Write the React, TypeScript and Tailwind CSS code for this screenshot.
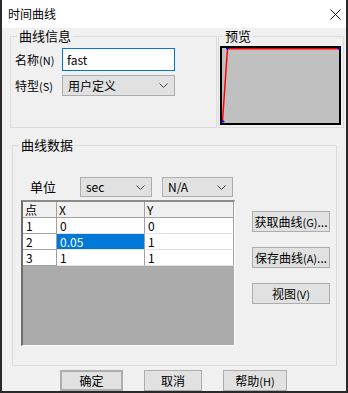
import React from 'react';

const Chevron = () => (
  <svg width="9" height="5" viewBox="0 0 9 5" className="shrink-0">
    <path d="M0.5 0.5L4.5 4.5L8.5 0.5" fill="none" stroke="#444" strokeWidth="1" />
  </svg>
);

const Select = ({ value, className }: { value: string; className: string }) => (
  <div
    className={`flex items-center justify-between border border-[#adadad] bg-[#e1e1e1] pl-[5px] pr-[6px] ${className}`}>
    <span>{value}</span>
    <Chevron />
  </div>
);

const Button = ({ children, className }: { children: React.ReactNode; className: string }) => (
  <div
    className={`flex items-center justify-center border border-[#adadad] bg-[#e1e1e1] text-[12px] leading-[14px] ${className}`}>
    {children}
  </div>
);

const Key = ({ k }: { k: string }) => <span className="text-[11px]">({k})</span>;

const rows = [
  ['1', '0', '0'],
  ['2', '0.05', '1'],
  ['3', '1', '1']
];

export default function App() {
  return (
    <div className="w-[348px] h-[393px] flex flex-col bg-[#f0f0f0] border-x-2 border-b-2 border-[#2a2a2a] text-[12px] leading-[14px] text-black font-['Noto_Sans_CJK_SC','Microsoft_YaHei',sans-serif]">
      {/* title bar */}
      <div className="h-[28px] shrink-0 flex items-center bg-white pl-[6px] pr-[5px]">
        <span className="text-[12px]">时间曲线</span>
        <svg width="11" height="11" viewBox="0 0 11 11" className="ml-auto">
          <path d="M0.5 0.5L10.5 10.5M10.5 0.5L0.5 10.5" stroke="#111" strokeWidth="1" />
        </svg>
      </div>

      {/* top groups */}
      <div className="flex mt-[1px] ml-[8px]">
        <fieldset className="w-[207px] h-[99px] border border-[#dcdcdc]">
          <legend className="ml-[6px] px-[2px] text-[13px] leading-[14px]">曲线信息</legend>
          <div className="flex flex-col gap-[4px] pt-[5px] pl-[4px]">
            <div className="flex items-center">
              <span className="w-[47px]">
                名称<Key k="N" />
              </span>
              <div className="w-[113px] h-[23px] border border-[#0078d7] bg-white flex items-center pl-[4px]">
                fast
              </div>
            </div>
            <div className="flex items-center">
              <span className="w-[47px]">
                特型<Key k="S" />
              </span>
              <Select value="用户定义" className="w-[113px] h-[21px]" />
            </div>
          </div>
        </fieldset>
        <fieldset className="w-[126px] h-[99px] ml-[1px] border border-[#dcdcdc]">
          <legend className="ml-[4px] px-[2px] text-[13px] leading-[14px]">预览</legend>
          <div className="mt-[3px] ml-[1px] w-[121px] h-[79px] border-2 border-black bg-[#c0c0c0]">
            <svg width="117" height="75" viewBox="0 0 117 75" className="overflow-visible">
              <polyline points="0.5,73 5.5,0.8 117,0.8" fill="none" stroke="#ff0000" strokeWidth="1.5" />
              <path d="M-0.5 73.5h3M1 72v3M4 0.5h3M5.5 -1v3M115.5 0.5h3M117 -1v3" stroke="#0000ff" strokeWidth="1" />
            </svg>
          </div>
        </fieldset>
      </div>

      {/* data group */}
      <fieldset className="mt-[10px] ml-[10px] w-[325px] h-[228px] border border-[#dcdcdc]">
        <legend className="ml-[6px] px-[2px] text-[13px] leading-[14px]">曲线数据</legend>
        <div className="flex items-center mt-[25px] h-[20px]">
          <span className="ml-[17px] w-[50px] text-[13px]">单位</span>
          <Select value="sec" className="w-[72px] h-[20px]" />
          <Select value="N/A" className="ml-[10px] w-[71px] h-[20px]" />
        </div>
        <div className="flex mt-[3px]">
          <div className="ml-[8px] w-[214px] h-[146px] flex flex-col bg-[#ababab] border-l-2 border-t-2 border-r border-b border-l-[#6e6e6e] border-t-[#8a8a8a] border-r-white border-b-white">
            <div className="grid grid-cols-[34px_88px_1fr] bg-white">
              {['点', 'X', 'Y'].map((h) => (
                <div
                  key={h}
                  className="h-[16px] pl-[2px] flex items-center bg-[#f0f0f0] border-r border-b border-[#a0a0a0]">
                  {h}
                </div>
              ))}
              {rows.map((r, i) =>
                r.map((c, j) => (
                  <div
                    key={`${i}-${j}`}
                    className={`h-[16px] pl-[3px] flex items-center border-r border-b ${
                      j === 0 ? 'border-[#a0a0a0]' : 'border-r-[#a0a0a0] border-b-[#e3e3e3]'
                    } ${i === 1 && j === 1 ? 'bg-[#0078d7] text-white' : ''}`}>
                    {c}
                  </div>
                ))
              )}
            </div>
          </div>
          <div className="ml-[17px] mt-[11px] flex flex-col gap-[15px]">
            <Button className="w-[78px] h-[21px]">
              获取曲线<Key k="G" />...
            </Button>
            <Button className="w-[78px] h-[21px]">
              保存曲线<Key k="A" />...
            </Button>
            <Button className="w-[78px] h-[21px]">
              视图<Key k="V" />
            </Button>
          </div>
        </div>
      </fieldset>

      {/* bottom buttons */}
      <div className="flex mt-[4px] ml-[58px] gap-[21px]">
        <Button className="w-[63px] h-[21px] border-2 border-[#0078d7]">确定</Button>
        <Button className="w-[58px] h-[21px]">取消</Button>
        <Button className="w-[64px] h-[21px]">
          帮助<Key k="H" />
        </Button>
      </div>
    </div>
  );
}
